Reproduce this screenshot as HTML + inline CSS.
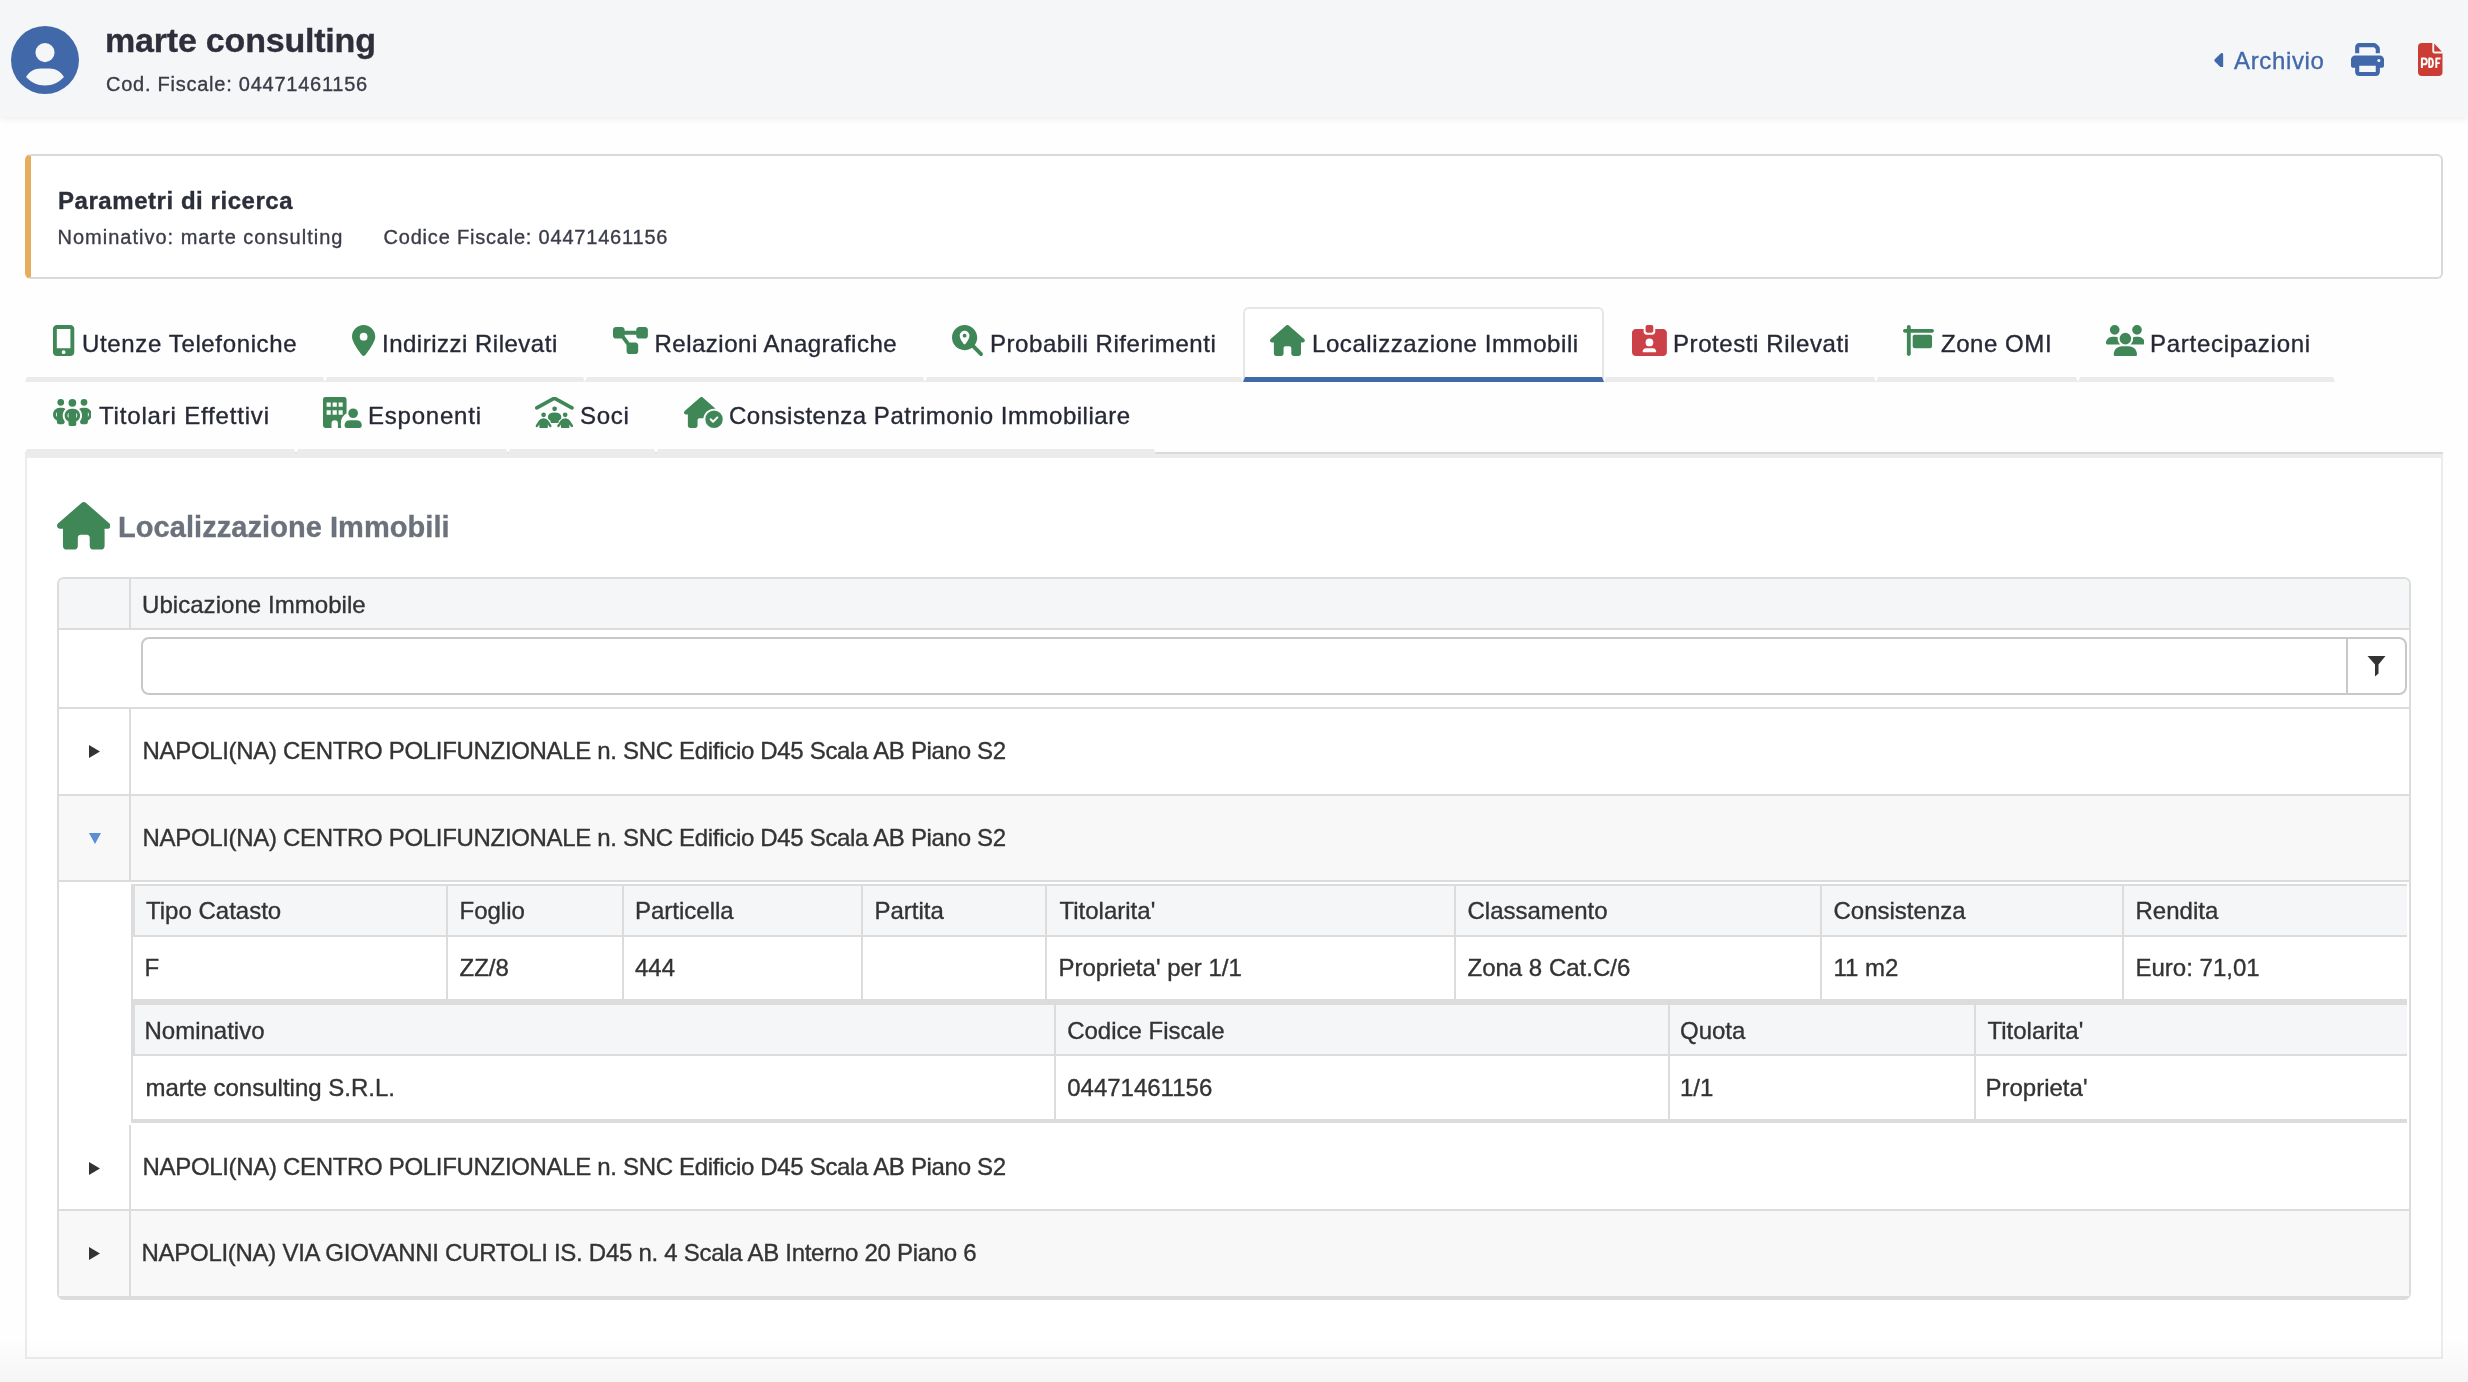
<!DOCTYPE html>
<html><head><meta charset="utf-8"><title>marte consulting</title>
<style>
html,body{margin:0;padding:0;width:2468px;height:1382px;overflow:hidden;background:#fefefe;}
body{position:relative;font-family:"Liberation Sans",sans-serif;will-change:transform;}
.t{position:absolute;white-space:nowrap;-webkit-font-smoothing:antialiased;-webkit-text-stroke:0.35px currentColor;}
.r{position:absolute;display:block;}
svg.r{z-index:2;}
</style></head><body>
<div class="r" style="left:0px;top:0px;width:2468px;height:117px;background:#f5f6f8;box-shadow:0 2px 7px rgba(0,0,0,0.07);z-index:2"></div>
<svg class="r" style="left:11px;top:25.5px;z-index:3" width="68" height="68" viewBox="0 0 512 512"><path fill="#4169aa" d="M399 384.2C376.9 345.8 335.4 320 288 320H224c-47.4 0-88.9 25.8-111 64.2c35.2 39.2 86.2 63.8 143 63.8s107.8-24.7 143-63.8zM0 256a256 256 0 1 1 512 0A256 256 0 1 1 0 256zm256 16a72 72 0 1 0 0-144 72 72 0 1 0 0 144z"/></svg>
<div class="t" style="left:105.0px;top:22.92px;font-size:34px;line-height:34px;color:#2e2f3b;font-weight:700;letter-spacing:-0.2px;z-index:3">marte consulting</div>
<div class="t" style="left:106.0px;top:73.87px;font-size:20px;line-height:20px;color:#3a3c48;font-weight:400;letter-spacing:0.75px;z-index:3">Cod. Fiscale: 04471461156</div>
<svg class="r" style="left:2214.2px;top:52.7px;z-index:3" width="9.5" height="14.7" viewBox="0 96 192 320"><path fill="#4169aa" d="M9.4 278.6c-12.5-12.5-12.5-32.8 0-45.3l128-128c9.2-9.2 22.9-11.9 34.9-6.9s19.8 16.6 19.8 29.6l0 256c0 12.9-7.8 24.6-19.8 29.6s-25.7 2.2-34.9-6.9l-128-128z"/></svg>
<div class="t" style="left:2234.0px;top:48.68px;font-size:24px;line-height:24px;color:#4169aa;font-weight:400;letter-spacing:0.65px;z-index:3">Archivio</div>
<svg class="r" style="left:2351px;top:43px;z-index:3" width="33" height="33" viewBox="0 0 512 512"><path fill="#4169aa" d="M128 0C92.7 0 64 28.7 64 64v96h64V64H354.7L384 93.3V160h64V93.3c0-17-6.7-33.3-18.7-45.3L400 18.7C388 6.7 371.7 0 354.7 0H128zM384 352v32 64H128V384 368 352H384zm64 32h32c17.7 0 32-14.3 32-32V256c0-35.3-28.7-64-64-64H64c-35.3 0-64 28.7-64 64v96c0 17.7 14.3 32 32 32H64v64c0 35.3 28.7 64 64 64H384c35.3 0 64-28.7 64-64V384zM432 248a24 24 0 1 1 0 48 24 24 0 1 1 0-48z"/></svg>
<svg class="r" style="left:2418px;top:43px;z-index:3" width="25" height="33" viewBox="0 0 25 33"><path fill="#cb3c34" d="M4 0 H14.3 V8.2 Q14.3 10.6 16.7 10.6 H24.5 V29 Q24.5 33 20.5 33 H4 Q0 33 0 29 V4 Q0 0 4 0 Z"/><path fill="#cb3c34" d="M16.2 0.6 L23.8 8.4 H16.2 Z"/><g fill="none" stroke="#fff" stroke-width="1.95" stroke-linejoin="round"><path d="M3.9 24.9 V15.5 H6.4 Q8.8 15.5 8.8 18.4 Q8.8 21.3 6.4 21.3 H3.9"/><path d="M11.2 24 V15.5 H12.4 Q14.9 15.5 14.9 19.75 Q14.9 24 12.4 24 Z"/><path d="M18.3 24.9 V15.5 H22.6 M18.3 20.1 H21.8"/></g></svg>
<div class="r" style="left:25px;top:154px;width:2418px;height:125px;box-sizing:border-box;border:2px solid #d9d9d9;border-left:6px solid #e4ae5e;border-radius:6px;background:#fff"></div>
<div class="t" style="left:58.0px;top:188.88px;font-size:24px;line-height:24px;color:#2c2e3a;font-weight:700;letter-spacing:0.55px;">Parametri di ricerca</div>
<div class="t" style="left:57.5px;top:226.87px;font-size:20px;line-height:20px;color:#3a3c48;font-weight:400;letter-spacing:1.0px;">Nominativo: marte consulting</div>
<div class="t" style="left:383.5px;top:226.87px;font-size:20px;line-height:20px;color:#3a3c48;font-weight:400;letter-spacing:0.8px;">Codice Fiscale: 04471461156</div>
<div class="r" style="left:25px;top:307px;width:300px;height:75px;box-sizing:border-box;border:2px solid transparent;border-bottom:5px solid #ebebeb;z-index:1"></div>
<div class="r" style="left:325px;top:307px;width:260px;height:75px;box-sizing:border-box;border:2px solid transparent;border-bottom:5px solid #ebebeb;z-index:1"></div>
<div class="r" style="left:585px;top:307px;width:340px;height:75px;box-sizing:border-box;border:2px solid transparent;border-bottom:5px solid #ebebeb;z-index:1"></div>
<div class="r" style="left:925px;top:307px;width:318px;height:75px;box-sizing:border-box;border:2px solid transparent;border-bottom:5px solid #ebebeb;z-index:1"></div>
<div class="r" style="left:1243px;top:307px;width:361px;height:75px;box-sizing:border-box;border:2px solid #e6e6e6;border-bottom:5px solid #4169aa;border-radius:6px 6px 0 0;background:#fff;z-index:1"></div>
<div class="r" style="left:1604px;top:307px;width:272px;height:75px;box-sizing:border-box;border:2px solid transparent;border-bottom:5px solid #ebebeb;z-index:1"></div>
<div class="r" style="left:1876px;top:307px;width:202px;height:75px;box-sizing:border-box;border:2px solid transparent;border-bottom:5px solid #ebebeb;z-index:1"></div>
<div class="r" style="left:2078px;top:307px;width:257px;height:75px;box-sizing:border-box;border:2px solid transparent;border-bottom:5px solid #ebebeb;z-index:1"></div>
<div class="r" style="left:25px;top:452px;width:2418px;height:2px;background:#dadada;"></div>
<div class="r" style="left:25px;top:379px;width:271px;height:75px;box-sizing:border-box;border:2px solid transparent;border-bottom:5px solid #ebebeb;z-index:1"></div>
<div class="r" style="left:296px;top:379px;width:212px;height:75px;box-sizing:border-box;border:2px solid transparent;border-bottom:5px solid #ebebeb;z-index:1"></div>
<div class="r" style="left:508px;top:379px;width:148px;height:75px;box-sizing:border-box;border:2px solid transparent;border-bottom:5px solid #ebebeb;z-index:1"></div>
<div class="r" style="left:656px;top:379px;width:500px;height:75px;box-sizing:border-box;border:2px solid transparent;border-bottom:5px solid #ebebeb;z-index:1"></div>
<div class="r" style="left:25px;top:454px;width:2418px;height:905px;box-sizing:border-box;border:2px solid #ececec;border-top:4px solid #ececec;background:#fff"></div>
<svg class="r" style="left:52.4px;top:325px;" width="23.25" height="31" viewBox="0 0 384 512"><path fill="#408758" d="M16 64C16 28.7 44.7 0 80 0H304c35.3 0 64 28.7 64 64V448c0 35.3-28.7 64-64 64H80c-35.3 0-64-28.7-64-64V64zM224 448a32 32 0 1 0 -64 0 32 32 0 1 0 64 0zM304 64H80V384H304V64z"/></svg>
<div class="t" style="left:82.0px;top:331.68px;font-size:24px;line-height:24px;color:#262836;font-weight:400;letter-spacing:0.64px;z-index:2">Utenze Telefoniche</div>
<svg class="r" style="left:352.3px;top:325px;" width="23.25" height="31" viewBox="0 0 384 512"><path fill="#408758" d="M215.7 499.2C267 435 384 279.4 384 192C384 86 298 0 192 0S0 86 0 192c0 87.4 117 243 168.3 307.2c12.3 15.3 35.1 15.3 47.4 0zM192 128a64 64 0 1 1 0 128 64 64 0 1 1 0-128z"/></svg>
<div class="t" style="left:382.0px;top:331.68px;font-size:24px;line-height:24px;color:#262836;font-weight:400;letter-spacing:0.5px;z-index:2">Indirizzi Rilevati</div>
<svg class="r" style="left:612.7px;top:325px;" width="34.88" height="31" viewBox="0 0 576 512"><path fill="#408758" d="M0 80C0 53.5 21.5 32 48 32h96c26.5 0 48 21.5 48 48V96H384V80c0-26.5 21.5-48 48-48h96c26.5 0 48 21.5 48 48v96c0 26.5-21.5 48-48 48H432c-26.5 0-48-21.5-48-48V160H192v16c0 1.7-.1 3.4-.3 5L272 288h96c26.5 0 48 21.5 48 48v96c0 26.5-21.5 48-48 48H272c-26.5 0-48-21.5-48-48V336c0-1.7 .1-3.4 .3-5L144 224H48c-26.5 0-48-21.5-48-48V80z"/></svg>
<div class="t" style="left:654.5px;top:331.68px;font-size:24px;line-height:24px;color:#262836;font-weight:400;letter-spacing:0.5px;z-index:2">Relazioni Anagrafiche</div>
<svg class="r" style="left:952.0px;top:325px;" width="31.00" height="31" viewBox="0 0 512 512"><path fill="#408758" d="M416 208c0 45.9-14.9 88.3-40 122.7L502.6 457.4c12.5 12.5 12.5 32.8 0 45.3s-32.8 12.5-45.3 0L330.7 376c-34.4 25.2-76.8 40-122.7 40C93.1 416 0 322.9 0 208S93.1 0 208 0S416 93.1 416 208zM288 176c0-44.2-35.8-80-80-80s-80 35.8-80 80c0 48.8 46.5 111.6 68.6 138.6c6 7.3 16.8 7.3 22.7 0c22.1-27 68.6-89.8 68.6-138.6zm-112 0a32 32 0 1 1 64 0 32 32 0 1 1 -64 0z"/></svg>
<div class="t" style="left:990.0px;top:331.68px;font-size:24px;line-height:24px;color:#262836;font-weight:400;letter-spacing:0.55px;z-index:2">Probabili Riferimenti</div>
<svg class="r" style="left:1269.8px;top:325px;" width="34.88" height="31" viewBox="0 0 576 512"><path fill="#408758" d="M575.8 255.5c0 18-15 32.1-32 32.1h-32l.7 160.2c0 2.7-.2 5.4-.5 8.1V472c0 22.1-17.9 40-40 40H456c-1.1 0-2.2 0-3.3-.1c-1.4 .1-2.8 .1-4.2 .1H416 392c-22.1 0-40-17.9-40-40V448 384c0-17.7-14.3-32-32-32H256c-17.7 0-32 14.3-32 32v64 24c0 22.1-17.9 40-40 40H160 128.1c-1.5 0-3-.1-4.5-.2c-1.2 .1-2.4 .2-3.6 .2H104c-22.1 0-40-17.9-40-40V360c0-.9 0-1.9 .1-2.8V287.6H32c-18 0-32-14-32-32.1c0-9 3-17 10-24L266.4 8c7-7 15-8 22-8s15 2 21 7L564.8 231.5c8 7 12 15 11 24z"/></svg>
<div class="t" style="left:1312.0px;top:331.68px;font-size:24px;line-height:24px;color:#262836;font-weight:400;letter-spacing:0.58px;z-index:2">Localizzazione Immobili</div>
<svg class="r" style="left:1632.3px;top:325px;" width="34.88" height="31" viewBox="0 0 576 512"><path fill="#cc4148" d="M256 0h64c17.7 0 32 14.3 32 32V96c0 17.7-14.3 32-32 32H256c-17.7 0-32-14.3-32-32V32c0-17.7 14.3-32 32-32zM64 64H192v48c0 26.5 21.5 48 48 48h96c26.5 0 48-21.5 48-48V64H512c35.3 0 64 28.7 64 64V448c0 35.3-28.7 64-64 64H64c-35.3 0-64-28.7-64-64V128C0 92.7 28.7 64 64 64zM176 437.3c0 5.9 4.8 10.7 10.7 10.7H389.3c5.9 0 10.7-4.8 10.7-10.7c0-29.5-23.9-53.3-53.3-53.3H229.3c-29.5 0-53.3 23.9-53.3 53.3zM288 352a64 64 0 1 0 0-128 64 64 0 1 0 0 128z"/></svg>
<div class="t" style="left:1673.0px;top:331.68px;font-size:24px;line-height:24px;color:#262836;font-weight:400;letter-spacing:0.58px;z-index:2">Protesti Rilevati</div>
<svg class="r" style="left:1903.4px;top:325px;" width="31.00" height="31" viewBox="0 0 512 512"><path fill="#408758" d="M96 0c17.7 0 32 14.3 32 32V64l352 0c17.7 0 32 14.3 32 32s-14.3 32-32 32l-352 0V480c0 17.7-14.3 32-32 32s-32-14.3-32-32V128H32C14.3 128 0 113.7 0 96S14.3 64 32 64H64V32C64 14.3 78.3 0 96 0zm96 160H448c17.7 0 32 14.3 32 32V352c0 17.7-14.3 32-32 32H192c-17.7 0-32-14.3-32-32V192c0-17.7 14.3-32 32-32z"/></svg>
<div class="t" style="left:1941.0px;top:331.68px;font-size:24px;line-height:24px;color:#262836;font-weight:400;letter-spacing:0.55px;z-index:2">Zone OMI</div>
<svg class="r" style="left:2105.5px;top:325px;" width="38.75" height="31" viewBox="0 0 640 512"><path fill="#408758" d="M144 0a80 80 0 1 1 0 160A80 80 0 1 1 144 0zM512 0a80 80 0 1 1 0 160A80 80 0 1 1 512 0zM0 298.7C0 239.8 47.8 192 106.7 192h42.7c15.9 0 31 3.5 44.6 9.7c-1.3 7.2-1.9 14.7-1.9 22.3c0 38.2 16.8 72.5 43.3 96c-.2 0-.4 0-.7 0H21.3C9.6 320 0 310.4 0 298.7zM405.3 320c-.2 0-.4 0-.7 0c26.6-23.5 43.3-57.8 43.3-96c0-7.6-.7-15-1.9-22.3c13.6-6.3 28.7-9.7 44.6-9.7h42.7C592.2 192 640 239.8 640 298.7c0 11.8-9.6 21.3-21.3 21.3H405.3zM224 224a96 96 0 1 1 192 0 96 96 0 1 1 -192 0zM128 485.3C128 411.7 187.7 352 261.3 352H378.7C452.3 352 512 411.7 512 485.3c0 14.7-11.9 26.7-26.7 26.7H154.7c-14.7 0-26.7-11.9-26.7-26.7z"/></svg>
<div class="t" style="left:2150.0px;top:331.68px;font-size:24px;line-height:24px;color:#262836;font-weight:400;letter-spacing:0.72px;z-index:2">Partecipazioni</div>
<svg class="r" style="left:52.5px;top:397px;" width="38.75" height="31" viewBox="0 0 640 512"><path fill="#408758" d="M72 88a56 56 0 1 1 112 0A56 56 0 1 1 72 88zM64 245.7C54 256.9 48 271.8 48 288s6 31.1 16 42.3V245.7zm144.4-49.3C178.7 222.7 160 261.2 160 304c0 34.3 12 65.8 32 90.5V416c0 17.7-14.3 32-32 32H96c-17.7 0-32-14.3-32-32V389.2C26.2 371.2 0 332.7 0 288c0-61.9 50.1-112 112-112h32c24 0 46.2 7.5 64.4 20.3zM448 416V394.5c20-24.7 32-56.2 32-90.5c0-42.8-18.7-81.3-48.4-107.700C449.8 183.5 472 176 496 176h32c61.9 0 112 50.1 112 112c0 44.7-26.2 83.2-64 101.2V416c0 17.7-14.3 32-32 32H480c-17.7 0-32-14.3-32-32zm8-328a56 56 0 1 1 112 0A56 56 0 1 1 456 88zM576 245.7v84.7c10-11.3 16-26.1 16-42.3s-6-31.1-16-42.3zM320 32a64 64 0 1 1 0 128 64 64 0 1 1 0-128zM240 304c0 16.2 6 31 16 42.3V261.7c-10 11.3-16 26.1-16 42.3zm144-42.3v84.7c10-11.3 16-26.1 16-42.3s-6-31.1-16-42.3zM448 304c0 44.7-26.2 83.2-64 101.2V448c0 17.7-14.3 32-32 32H288c-17.7 0-32-14.3-32-32V405.2c-37.8-18-64-56.5-64-101.2c0-61.9 50.1-112 112-112h32c61.9 0 112 50.1 112 112z"/></svg>
<div class="t" style="left:99.0px;top:403.68px;font-size:24px;line-height:24px;color:#262836;font-weight:400;letter-spacing:0.82px;z-index:2">Titolari Effettivi</div>
<svg class="r" style="left:323.3px;top:397px;" width="38.75" height="31" viewBox="0 0 640 512"><g fill="#408758"><path d="M40 0H349Q389 0 389 40V268Q330 300 300 380Q290 430 300 512H246V436Q246 382 194 382Q141 382 141 436V512H40Q0 512 0 472V40Q0 0 40 0Z M60 89V163H128V89Z M159 89V163H228V89Z M258 89V163H325V89Z M60 218V292H128V218Z M159 218V292H228V218Z M258 218V292H325V218Z" fill-rule="evenodd"/><circle cx="498" cy="268" r="80"/><path d="M356 470Q356 382 450 382H546Q640 382 640 470Q640 512 600 512H396Q356 512 356 470Z"/></g></svg>
<div class="t" style="left:368.0px;top:403.68px;font-size:24px;line-height:24px;color:#262836;font-weight:400;letter-spacing:0.78px;z-index:2">Esponenti</div>
<svg class="r" style="left:535.0px;top:397px;" width="38.75" height="31" viewBox="0 0 640 512"><g fill="#408758"><path d="M30 180L320 20L610 180" fill="none" stroke="#408758" stroke-width="62" stroke-linecap="round" stroke-linejoin="round"/><circle cx="142" cy="295" r="39"/><circle cx="498" cy="295" r="39"/><path d="M82 512H203Q212 512 212 500V455L235 488Q248 505 265 495Q280 485 270 468L225 395Q200 352 142 352Q84 352 59 395L14 468Q4 485 19 495Q36 505 49 488L72 455V500Q72 512 82 512Z"/><path transform="translate(356 0)" d="M82 512H203Q212 512 212 500V455L235 488Q248 505 265 495Q280 485 270 468L225 395Q200 352 142 352Q84 352 59 395L14 468Q4 485 19 495Q36 505 49 488L72 455V500Q72 512 82 512Z"/><path d="M212 340Q212 256 324 256Q436 256 436 340Q436 360 420 372L392 392V410Q392 430 372 430H276Q256 430 256 410V392L228 372Q212 360 212 340Z" stroke="#fff" stroke-width="22" paint-order="stroke"/><circle cx="324" cy="196" r="39"/></g></svg>
<div class="t" style="left:580.0px;top:403.68px;font-size:24px;line-height:24px;color:#262836;font-weight:400;letter-spacing:0.7px;z-index:2">Soci</div>
<svg class="r" style="left:684.0px;top:397px;" width="38.75" height="31" viewBox="0 0 640 512"><path fill="#408758" d="M320.7 352c8.1-89.7 83.5-160 175.3-160c8.9 0 17.6 .7 26.1 1.9L309.5 7c-6-5-14-7-21-7s-15 1-22 8L10 231.5c-7 7-10 15-10 24c0 18 14 32.1 32 32.1h32v69.7c-.1 .9-.1 1.8-.1 2.8V472c0 22.1 17.9 40 40 40h16c1.2 0 2.4-.1 3.6-.2c1.5 .1 3 .2 4.5 .2H160h24c22.1 0 40-17.9 40-40V448 384c0-17.7 14.3-32 32-32h64l.7 0zM640 368a144 144 0 1 0 -288 0 144 144 0 1 0 288 0zm-76.7-43.3c6.2 6.2 6.2 16.4 0 22.6l-72 72c-6.2 6.2-16.4 6.2-22.6 0l-40-40c-6.2-6.2-6.2-16.4 0-22.6s16.4-6.2 22.6 0L480 385.4l60.7-60.7c6.2-6.2 16.4-6.2 22.6 0z"/></svg>
<div class="t" style="left:729.0px;top:403.68px;font-size:24px;line-height:24px;color:#262836;font-weight:400;letter-spacing:0.51px;z-index:2">Consistenza Patrimonio Immobiliare</div>
<svg class="r" style="left:56.9px;top:502.3px;" width="53.55" height="47.6" viewBox="0 0 576 512"><path fill="#408758" d="M575.8 255.5c0 18-15 32.1-32 32.1h-32l.7 160.2c0 2.7-.2 5.4-.5 8.1V472c0 22.1-17.9 40-40 40H456c-1.1 0-2.2 0-3.3-.1c-1.4 .1-2.8 .1-4.2 .1H416 392c-22.1 0-40-17.9-40-40V448 384c0-17.7-14.3-32-32-32H256c-17.7 0-32 14.3-32 32v64 24c0 22.1-17.9 40-40 40H160 128.1c-1.5 0-3-.1-4.5-.2c-1.2 .1-2.4 .2-3.6 .2H104c-22.1 0-40-17.9-40-40V360c0-.9 0-1.9 .1-2.8V287.6H32c-18 0-32-14-32-32.1c0-9 3-17 10-24L266.4 8c7-7 15-8 22-8s15 2 21 7L564.8 231.5c8 7 12 15 11 24z"/></svg>
<div class="t" style="left:118.0px;top:513.10px;font-size:29px;line-height:29px;color:#6b727c;font-weight:700;letter-spacing:0.06px;">Localizzazione Immobili</div>
<div class="r" style="left:57px;top:577px;width:2354px;height:723px;box-sizing:border-box;border:2px solid #dcdcdc;border-bottom-width:4px;border-radius:7px;background:#fff;overflow:hidden"><div style="position:absolute;left:0;top:0;right:0;height:51px;background:#f5f6f8"></div></div>
<div class="r" style="left:59px;top:628px;width:2350px;height:2px;background:#dcdcdc;"></div>
<div class="r" style="left:129px;top:579px;width:2px;height:49px;background:#dcdcdc;"></div>
<div class="t" style="left:142.0px;top:592.68px;font-size:24px;line-height:24px;color:#333;font-weight:400;letter-spacing:0.05px;">Ubicazione Immobile</div>
<div class="r" style="left:141px;top:637px;width:2266px;height:58px;box-sizing:border-box;border:2px solid #c8c8c8;border-radius:8px;background:#fff"></div>
<div class="r" style="left:2346px;top:639px;width:2px;height:54px;background:#c8c8c8;"></div>
<svg class="r" style="left:2367px;top:655px;" width="19" height="22" viewBox="0 0 19 22"><path fill="#333" d="M0.5 1 H18.5 L11.5 9.5 V18.5 L8 21.5 V9.5 Z"/></svg>
<div class="r" style="left:59px;top:707px;width:2350px;height:2px;background:#dcdcdc;"></div>
<div class="r" style="left:129px;top:709px;width:2px;height:85px;background:#dcdcdc;"></div>
<div class="r" style="left:59px;top:794px;width:2350px;height:2px;background:#dcdcdc;"></div>
<div class="r" style="left:59px;top:796px;width:2350px;height:84px;background:#f8f8f8;"></div>
<div class="r" style="left:129px;top:796px;width:2px;height:84px;background:#dcdcdc;"></div>
<div class="r" style="left:59px;top:880px;width:2350px;height:2px;background:#dcdcdc;"></div>
<div class="r" style="left:129px;top:1125px;width:2px;height:84px;background:#dcdcdc;"></div>
<div class="r" style="left:59px;top:1209px;width:2350px;height:2px;background:#dcdcdc;"></div>
<div class="r" style="left:59px;top:1211px;width:2350px;height:85px;background:#f8f8f8;"></div>
<div class="r" style="left:129px;top:1211px;width:2px;height:85px;background:#dcdcdc;"></div>
<svg class="r" style="left:89px;top:745px;" width="11" height="13" viewBox="0 0 11 13"><path fill="#333" d="M0 0 L11 6.5 L0 13 Z"/></svg>
<svg class="r" style="left:89px;top:1162px;" width="11" height="13" viewBox="0 0 11 13"><path fill="#333" d="M0 0 L11 6.5 L0 13 Z"/></svg>
<svg class="r" style="left:89px;top:1247px;" width="11" height="13" viewBox="0 0 11 13"><path fill="#333" d="M0 0 L11 6.5 L0 13 Z"/></svg>
<svg class="r" style="left:89.4px;top:833px;" width="12" height="11" viewBox="0 0 12 11"><path fill="#5b8fd2" d="M0 0 H12 L6 11 Z"/></svg>
<div class="t" style="left:142.5px;top:738.58px;font-size:24px;line-height:24px;color:#333;font-weight:400;letter-spacing:-0.32px;">NAPOLI(NA) CENTRO POLIFUNZIONALE n. SNC Edificio D45 Scala AB Piano S2</div>
<div class="t" style="left:142.5px;top:825.58px;font-size:24px;line-height:24px;color:#333;font-weight:400;letter-spacing:-0.32px;">NAPOLI(NA) CENTRO POLIFUNZIONALE n. SNC Edificio D45 Scala AB Piano S2</div>
<div class="t" style="left:142.5px;top:1154.68px;font-size:24px;line-height:24px;color:#333;font-weight:400;letter-spacing:-0.32px;">NAPOLI(NA) CENTRO POLIFUNZIONALE n. SNC Edificio D45 Scala AB Piano S2</div>
<div class="t" style="left:141.5px;top:1240.88px;font-size:24px;line-height:24px;color:#333;font-weight:400;letter-spacing:-0.28px;">NAPOLI(NA) VIA GIOVANNI CURTOLI IS. D45 n. 4 Scala AB Interno 20 Piano 6</div>
<div class="r" style="left:131px;top:884px;width:2276px;height:2px;background:#dcdcdc;"></div>
<div class="r" style="left:131px;top:884px;width:2px;height:239px;background:#dcdcdc;"></div>
<div class="r" style="left:133px;top:886px;width:2px;height:49px;background:#dcdcdc;"></div>
<div class="r" style="left:135px;top:886px;width:2272px;height:49px;background:#f5f6f8;"></div>
<div class="r" style="left:133px;top:935px;width:2274px;height:2px;background:#dcdcdc;"></div>
<div class="r" style="left:133px;top:999px;width:2274px;height:6px;background:#dcdcdc;"></div>
<div class="r" style="left:446px;top:886px;width:2px;height:113px;background:#dcdcdc;"></div>
<div class="r" style="left:622px;top:886px;width:2px;height:113px;background:#dcdcdc;"></div>
<div class="r" style="left:861px;top:886px;width:2px;height:113px;background:#dcdcdc;"></div>
<div class="r" style="left:1045px;top:886px;width:2px;height:113px;background:#dcdcdc;"></div>
<div class="r" style="left:1454px;top:886px;width:2px;height:113px;background:#dcdcdc;"></div>
<div class="r" style="left:1820px;top:886px;width:2px;height:113px;background:#dcdcdc;"></div>
<div class="r" style="left:2122px;top:886px;width:2px;height:113px;background:#dcdcdc;"></div>
<div class="t" style="left:146.0px;top:898.68px;font-size:24px;line-height:24px;color:#333;font-weight:400;letter-spacing:0px;">Tipo Catasto</div>
<div class="t" style="left:459.5px;top:898.68px;font-size:24px;line-height:24px;color:#333;font-weight:400;letter-spacing:0px;">Foglio</div>
<div class="t" style="left:635.0px;top:898.68px;font-size:24px;line-height:24px;color:#333;font-weight:400;letter-spacing:0px;">Particella</div>
<div class="t" style="left:874.5px;top:898.68px;font-size:24px;line-height:24px;color:#333;font-weight:400;letter-spacing:0px;">Partita</div>
<div class="t" style="left:1059.5px;top:898.68px;font-size:24px;line-height:24px;color:#333;font-weight:400;letter-spacing:0px;">Titolarita'</div>
<div class="t" style="left:1467.5px;top:898.68px;font-size:24px;line-height:24px;color:#333;font-weight:400;letter-spacing:0px;">Classamento</div>
<div class="t" style="left:1833.5px;top:898.68px;font-size:24px;line-height:24px;color:#333;font-weight:400;letter-spacing:0px;">Consistenza</div>
<div class="t" style="left:2135.5px;top:898.68px;font-size:24px;line-height:24px;color:#333;font-weight:400;letter-spacing:0px;">Rendita</div>
<div class="t" style="left:144.5px;top:955.88px;font-size:24px;line-height:24px;color:#333;font-weight:400;letter-spacing:0px;">F</div>
<div class="t" style="left:459.5px;top:955.88px;font-size:24px;line-height:24px;color:#333;font-weight:400;letter-spacing:0px;">ZZ/8</div>
<div class="t" style="left:635.0px;top:955.88px;font-size:24px;line-height:24px;color:#333;font-weight:400;letter-spacing:0px;">444</div>
<div class="t" style="left:1058.5px;top:955.88px;font-size:24px;line-height:24px;color:#333;font-weight:400;letter-spacing:0px;">Proprieta' per 1/1</div>
<div class="t" style="left:1467.5px;top:955.88px;font-size:24px;line-height:24px;color:#333;font-weight:400;letter-spacing:0px;">Zona 8 Cat.C/6</div>
<div class="t" style="left:1833.5px;top:955.88px;font-size:24px;line-height:24px;color:#333;font-weight:400;letter-spacing:0px;">11 m2</div>
<div class="t" style="left:2135.5px;top:955.88px;font-size:24px;line-height:24px;color:#333;font-weight:400;letter-spacing:0px;">Euro: 71,01</div>
<div class="r" style="left:133px;top:1005px;width:2px;height:49px;background:#dcdcdc;"></div>
<div class="r" style="left:135px;top:1005px;width:2272px;height:49px;background:#f5f6f8;"></div>
<div class="r" style="left:133px;top:1054px;width:2274px;height:2px;background:#dcdcdc;"></div>
<div class="r" style="left:133px;top:1119px;width:2274px;height:4px;background:#dcdcdc;"></div>
<div class="r" style="left:1054px;top:1005px;width:2px;height:114px;background:#dcdcdc;"></div>
<div class="r" style="left:1668px;top:1005px;width:2px;height:114px;background:#dcdcdc;"></div>
<div class="r" style="left:1974px;top:1005px;width:2px;height:114px;background:#dcdcdc;"></div>
<div class="t" style="left:144.5px;top:1018.68px;font-size:24px;line-height:24px;color:#333;font-weight:400;letter-spacing:0px;">Nominativo</div>
<div class="t" style="left:1067.2px;top:1018.68px;font-size:24px;line-height:24px;color:#333;font-weight:400;letter-spacing:0px;">Codice Fiscale</div>
<div class="t" style="left:1680.0px;top:1018.68px;font-size:24px;line-height:24px;color:#333;font-weight:400;letter-spacing:0px;">Quota</div>
<div class="t" style="left:1987.5px;top:1018.68px;font-size:24px;line-height:24px;color:#333;font-weight:400;letter-spacing:0px;">Titolarita'</div>
<div class="t" style="left:145.5px;top:1075.68px;font-size:24px;line-height:24px;color:#333;font-weight:400;letter-spacing:0px;">marte consulting S.R.L.</div>
<div class="t" style="left:1067.2px;top:1075.68px;font-size:24px;line-height:24px;color:#333;font-weight:400;letter-spacing:0px;">04471461156</div>
<div class="t" style="left:1680.0px;top:1075.68px;font-size:24px;line-height:24px;color:#333;font-weight:400;letter-spacing:0px;">1/1</div>
<div class="t" style="left:1985.5px;top:1075.68px;font-size:24px;line-height:24px;color:#333;font-weight:400;letter-spacing:0px;">Proprieta'</div>
<div class="r" style="left:0px;top:1338px;width:2468px;height:44px;background:linear-gradient(rgba(0,0,0,0),rgba(0,0,0,0.035));z-index:5"></div>
</body></html>
